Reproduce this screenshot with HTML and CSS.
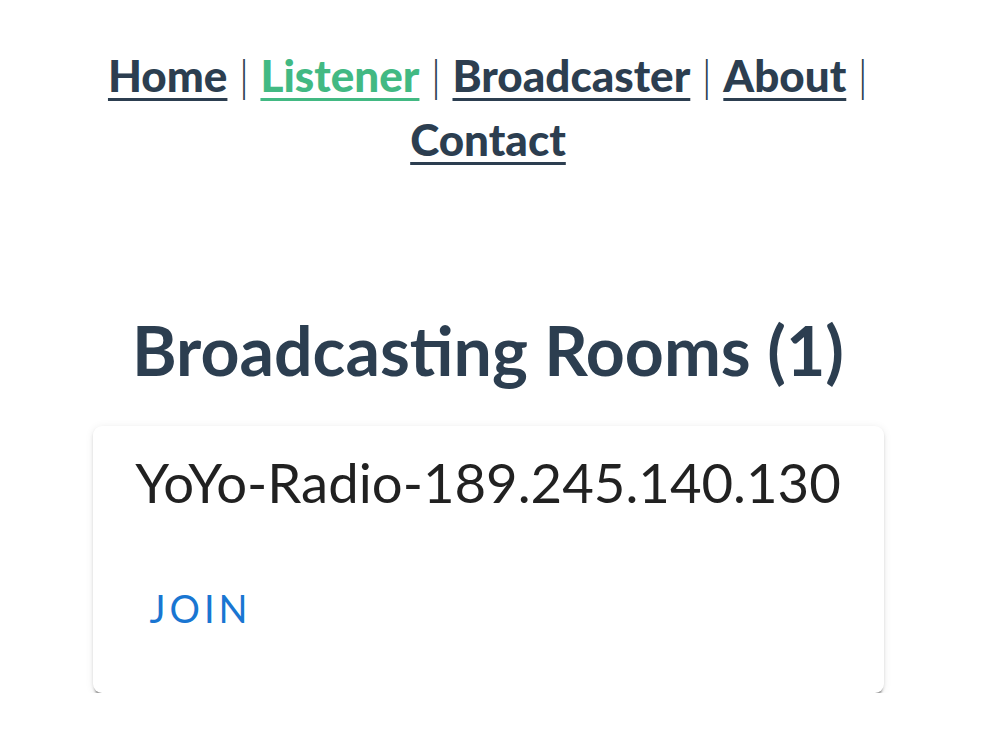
FILE: index.html
```html
<!DOCTYPE html>
<html lang="en">
<head>
    <meta charset="UTF-8">
    <title>YoYo Radio</title>
    <link rel="stylesheet" href="styles.css">
</head>
<body>
<div id="app">
    <div id="nav">
        <a href="#/">Home</a> <span class="sep">|</span>
        <a href="#/listener" class="active">Listener</a> <span class="sep">|</span>
        <a href="#/broadcaster">Broadcaster</a> <span class="sep">|</span>
        <a href="#/about">About</a> <span class="sep">|</span>
        <a href="#/contact">Contact</a>
    </div>
    <div class="rooms">
        <h1>Broadcasting Rooms (1)</h1>
        <div class="card">
            <div class="card-content">
                <h2 class="room-name">YoYo-Radio-189.245.140.130</h2>
            </div>
            <div class="card-actions">
                <button class="btn-join" type="button">Join</button>
            </div>
        </div>
    </div>
</div>
</body>
</html>
```

FILE: styles.css
```css
* {
    margin: 0;
    padding: 0;
}

body {
    background: #fff;
}

#app {
    width: 976px;
    font-family: Lato, "Noto Sans", sans-serif;
    text-align: center;
    color: #2c3e50;
}

#nav {
    width: 800px;
    margin: 0 auto;
    padding-top: 43px;
    font-size: 44px;
    line-height: 64px;
}
#nav a {
    font-weight: 900;
    color: #2c3e50;
    text-decoration-thickness: 3px;
    text-underline-offset: 6px;
}
#nav a.active {
    color: #42b983;
}
#nav .sep {
    font-weight: 300;
    color: #2c3e50;
}

.rooms {
    padding-top: 139px;
}
.rooms h1 {
    font-size: 68px;
    line-height: 80px;
    font-weight: bold;
    margin-bottom: 36px;
}

.card {
    width: 791px;
    margin: 0 auto;
    background: #fff;
    border-radius: 9px;
    box-shadow: 0 5px 2px -2px rgba(0, 0, 0, 0.32), 0 2px 3px 0 rgba(0, 0, 0, 0.12), 0 1px 8px 0 rgba(0, 0, 0, 0.08);
    overflow: hidden;
}
.card-content {
    padding: 21px 40px 20px;
}
.room-name {
    font-size: 54.5px;
    line-height: 70px;
    font-weight: normal;
    color: rgba(0, 0, 0, 0.87);
}
.card-actions {
    display: flex;
    padding: 36px 20px 50px;
}
.btn-join {
    border: 0;
    background: none;
    font-family: inherit;
    font-size: 38px;
    line-height: 50px;
    letter-spacing: 4px;
    text-transform: uppercase;
    color: #1976d2;
    padding: 10px 37px;
    cursor: pointer;
}
```
